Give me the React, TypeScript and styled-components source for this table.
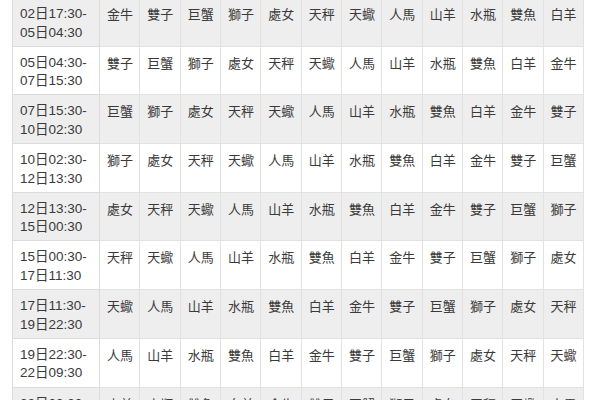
import React from 'react';
import styled, {createGlobalStyle} from 'styled-components';

const SIGNS = ['白羊', '金牛', '雙子', '巨蟹', '獅子', '處女', '天秤', '天蠍', '人馬', '山羊', '水瓶', '雙魚'];

const PERIODS = [
    ['02日17:30-', '05日04:30'],
    ['05日04:30-', '07日15:30'],
    ['07日15:30-', '10日02:30'],
    ['10日02:30-', '12日13:30'],
    ['12日13:30-', '15日00:30'],
    ['15日00:30-', '17日11:30'],
    ['17日11:30-', '19日22:30'],
    ['19日22:30-', '22日09:30'],
    ['22日09:30-', '24日20:30'],
];

const GlobalStyle = createGlobalStyle`
  html, body {
    margin: 0;
    padding: 0;
    background: #fff;
    overflow: hidden;
  }
  body {
    font-family: "Liberation Sans", "Noto Sans CJK TC", sans-serif;
  }
`

export default function App() {
    return (
        <>
            <GlobalStyle/>
            <StyledPage>
                <StyledTable>
                    <colgroup>
                        <col style={{width: 87}}/>
                        {SIGNS.map((_, i) => <col key={i}/>)}
                    </colgroup>
                    <tbody>
                    {PERIODS.map((period, row) => (
                        <StyledRow key={row} $shaded={row % 2 === 0}>
                            <StyledTimeCell>{period[0]}<br/>{period[1]}</StyledTimeCell>
                            {SIGNS.map((_, col) => (
                                <StyledSignCell key={col}>{SIGNS[(row + 1 + col) % 12]}</StyledSignCell>
                            ))}
                        </StyledRow>
                    ))}
                    </tbody>
                </StyledTable>
            </StyledPage>
        </>
    );
}

const StyledPage = styled.div`
  width: 600px;
  height: 400px;
  overflow: hidden;
  padding-left: 12px;
  box-sizing: border-box;
`

const StyledTable = styled.table`
  width: 572px;
  margin-top: -3px;
  table-layout: fixed;
  border-collapse: collapse;
  border: 1px solid #dcdcdc;
  color: #3a3a3a;
  font-size: 13.5px;
  line-height: 18.5px;
`

const StyledRow = styled.tr<{$shaded?: boolean}>`
  height: 48.7px;
  background-color: ${({$shaded}) => $shaded ? '#eeeeee' : '#ffffff'};
`

const StyledTimeCell = styled.td`
  padding: 7px 0 0 7px;
  vertical-align: top;
  border: 1px solid #dcdcdc;
  white-space: nowrap;
  font-family: "Liberation Sans", "Noto Sans CJK TC", sans-serif;
`

const StyledSignCell = styled.td`
  padding: 7px 0 0 7px;
  vertical-align: top;
  border: 1px solid #e2e2e2;
  white-space: nowrap;
  font-family: "Noto Sans CJK TC", sans-serif;
  font-size: 13px;
`
